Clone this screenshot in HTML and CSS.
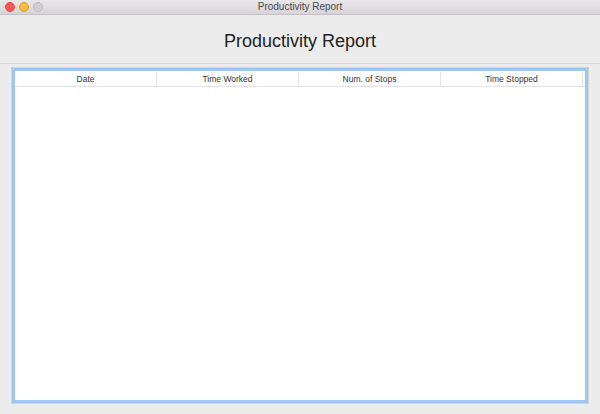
FILE: index.html
```html
<!DOCTYPE html>
<html>
<head>
<meta charset="utf-8">
<link rel="stylesheet" href="styles.css">
</head>
<body>
<div class="window">
  <div class="titlebar">
    <div class="lights">
      <span class="light red"></span>
      <span class="light yellow"></span>
      <span class="light grey"></span>
    </div>
    <div class="wtitle">Productivity Report</div>
  </div>
  <div class="header">
    <h1 class="heading">Productivity Report</h1>
  </div>
  <div class="content">
    <div class="tablebox">
      <div class="thead">
        <div class="th">Date</div>
        <div class="th">Time Worked</div>
        <div class="th">Num. of Stops</div>
        <div class="th">Time Stopped</div>
      </div>
      <div class="tbody"></div>
    </div>
  </div>
</div>
</body>
</html>
```
FILE: styles.css
```css
html, body {
  margin: 0;
  padding: 0;
}
body {
  width: 600px;
  height: 414px;
  background: #ececec;
  font-family: "Liberation Sans", Arial, sans-serif;
  overflow: hidden;
}
.window {
  display: flex;
  flex-direction: column;
  height: 414px;
}
.titlebar {
  position: relative;
  height: 14px;
  border-bottom: 1px solid #c2c0c2;
  background: linear-gradient(#e9e7e9, #d6d4d6);
  display: flex;
  align-items: center;
  justify-content: center;
}
.lights {
  position: absolute;
  left: 5px;
  top: 2px;
  display: flex;
  gap: 4px;
}
.light {
  width: 10px;
  height: 10px;
  border-radius: 50%;
  box-sizing: border-box;
}
.red { background: #fc5753; border: 1px solid #e2463f; }
.yellow { background: #fdbc40; border: 1px solid #dea123; }
.grey { background: #d0ced0; border: 1px solid #bcbabc; }
.wtitle {
  font-size: 10px;
  color: #4a4a4a;
  line-height: 14px;
}
.header {
  height: 48px;
  border-bottom: 1px solid #d6d6d6;
  display: flex;
  align-items: center;
  justify-content: center;
}
.heading {
  margin: 0;
  font-size: 18px;
  font-weight: normal;
  color: #222;
  padding-top: 4px;
}
.content {
  flex: 1;
  padding: 4px 12px 11px 12px;
  display: flex;
}
.tablebox {
  flex: 1;
  border: 3px solid #9ec6f2;
  box-shadow: 0 0 0 1px #d4d4d4;
  background: #fff;
  display: flex;
  flex-direction: column;
}
.thead {
  display: grid;
  grid-template-columns: repeat(4, 142px);
  height: 15px;
  border-bottom: 1px solid #e2e2e2;
}
.th {
  font-size: 8.5px;
  color: #333;
  text-align: center;
  border-right: 1px solid #e4e4e4;
  margin: 1px 0;
  line-height: 14px;
}
.tbody {
  flex: 1;
}
```
